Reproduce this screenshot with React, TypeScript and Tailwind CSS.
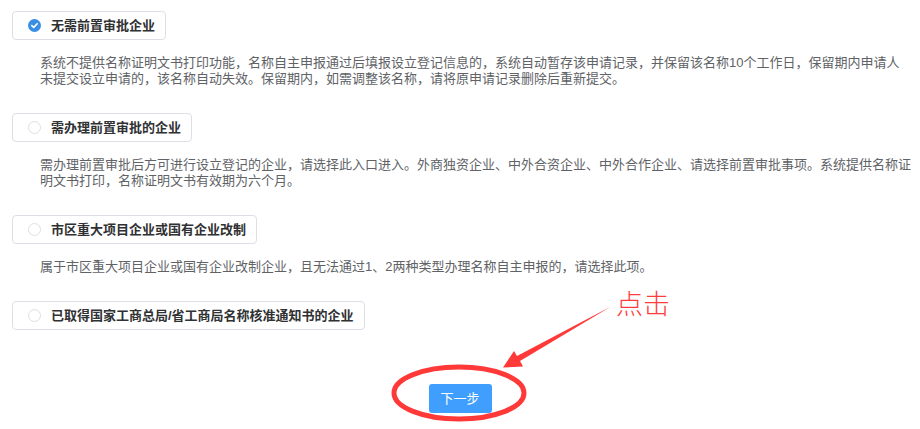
import { useState } from "react";

type Option = {
	id: string;
	title: string;
	desc: string;
};

const options: Option[] = [
	{
		id: "a",
		title: "无需前置审批企业",
		desc: "系统不提供名称证明文书打印功能，名称自主申报通过后填报设立登记信息的，系统自动暂存该申请记录，并保留该名称10个工作日，保留期内申请人未提交设立申请的，该名称自动失效。保留期内，如需调整该名称，请将原申请记录删除后重新提交。",
	},
	{
		id: "b",
		title: "需办理前置审批的企业",
		desc: "需办理前置审批后方可进行设立登记的企业，请选择此入口进入。外商独资企业、中外合资企业、中外合作企业、请选择前置审批事项。系统提供名称证明文书打印，名称证明文书有效期为六个月。",
	},
	{
		id: "c",
		title: "市区重大项目企业或国有企业改制",
		desc: "属于市区重大项目企业或国有企业改制企业，且无法通过1、2两种类型办理名称自主申报的，请选择此项。",
	},
	{
		id: "d",
		title: "已取得国家工商总局/省工商局名称核准通知书的企业",
		desc: "",
	},
];

const Radio = ({ checked }: { checked: boolean }) =>
	checked ? (
		<span className="w-[13px] h-[13px] rounded-full bg-[#3a8ee6] flex items-center justify-center mr-[10px]">
			<svg width="9" height="9" viewBox="0 0 8 8">
				<path d="M1.6 4.1 L3.3 5.7 L6.4 2.4" fill="none" stroke="#fff" strokeWidth="1.4" strokeLinecap="round" strokeLinejoin="round" />
			</svg>
		</span>
	) : (
		<span className="w-[13px] h-[13px] rounded-full border border-[#dcdfe6] bg-white mr-[10px]" />
	);

export default function App() {
	const [selected, setSelected] = useState("a");
	return (
		<div
			className="relative w-[920px] h-[429px] bg-white overflow-hidden text-[13px]"
			style={{ fontFamily: '"Liberation Sans", "Noto Sans CJK SC", sans-serif' }}
		>
			<div className="pl-[12px] pt-[11px] flex flex-col">
				{options.map((o) => (
					<div key={o.id} className="flex flex-col items-start">
						<button
							onClick={() => setSelected(o.id)}
							className="h-[29px] flex items-center border border-[#dcdfe6] rounded-[4px] pl-[15px] pr-[10px] bg-white cursor-pointer"
						>
							<Radio checked={selected === o.id} />
							<span className="font-bold text-[13px] text-[#303133] leading-[15px]">{o.title}</span>
						</button>
						{o.desc && (
							<p className="ml-[28px] w-[872px] mt-[15px] mb-[26px] leading-[16px] text-[#606266]">
								{o.desc}
							</p>
						)}
					</div>
				))}
			</div>

			<div className="flex justify-center mt-[54px]">
				<button className="w-[63px] h-[29px] rounded-[3px] bg-[#409eff] text-white text-[13px] flex items-center justify-center">
					下一步
				</button>
			</div>

			{/* annotation overlay */}
			<svg className="absolute left-0 top-0 pointer-events-none" width="920" height="429">
				<ellipse cx="459" cy="393" rx="65" ry="26" fill="none" stroke="#ff3838" strokeWidth="5" />
				<polygon
					points="503,367.5 514,351 517,356 611,306.5 520,361 523,366.5"
					fill="#ff3838"
				/>
			</svg>
			<span
				className="absolute left-[616px] top-[287px] text-[27px] leading-[32px] font-light text-[#ff3b3b]"
				style={{ fontFamily: '"Noto Sans CJK SC", sans-serif' }}
			>
				点击
			</span>
		</div>
	);
}
